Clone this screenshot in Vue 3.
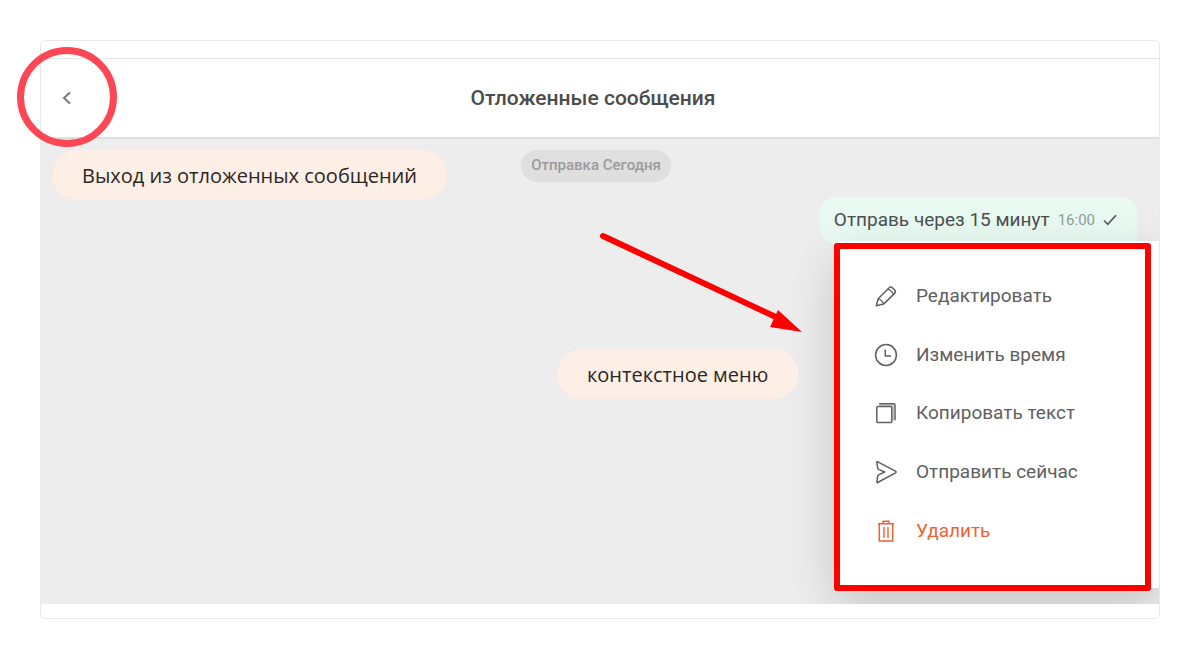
<script setup>
const items = [
  { id: 'edit', label: 'Редактировать' },
  { id: 'time', label: 'Изменить время' },
  { id: 'copy', label: 'Копировать текст' },
  { id: 'send', label: 'Отправить сейчас' },
  { id: 'delete', label: 'Удалить', danger: true },
]
</script>

<template>
  <main class="page">
    <section class="card">
      <header class="header">
        <button class="back" type="button" aria-label="Назад">
          <svg width="12" height="16" viewBox="0 0 12 16" fill="none" stroke="#777" stroke-width="2">
            <path d="M9 2.5 3 8 9 13.5" />
          </svg>
          <span class="ring"></span>
        </button>
        <h1 class="title">Отложенные сообщения</h1>
      </header>

      <div class="chat">
        <div class="day">Отправка Сегодня</div>
        <div class="message">
          <span>Отправь через 15 минут</span>
          <time class="clock">16:00</time>
          <svg class="check" width="14" height="12" viewBox="0 0 14 12" fill="none" stroke="#555f59" stroke-width="1.7">
            <path d="M1 6.5 4.8 10.3 13 1.2" />
          </svg>
        </div>

        <div class="menu">
          <ul class="list">
            <li v-for="item in items" :key="item.id" class="row">
              <button type="button" class="action" :class="{ danger: item.danger }">
                <svg class="icon" width="24" height="24" viewBox="0 0 24 24" fill="none" stroke="currentColor" stroke-width="1.5" stroke-linejoin="round">
                  <template v-if="item.id === 'edit'">
                    <path d="M2.3 21.7 4.2 14.8 14.9 4Q16.6 2.2 18.4 3.8L20.6 6Q22.2 7.7 20.5 9.4L9.6 20.1Z" />
                    <path d="M4.2 14.8Q8 15.6 9.6 20.1M13.8 5.3Q17.8 6.2 19.2 10.6" stroke-width="1.2" />
                  </template>
                  <template v-else-if="item.id === 'time'">
                    <circle cx="12" cy="12" r="10.4" />
                    <path d="M11.3 6.5V13H17" />
                  </template>
                  <template v-else-if="item.id === 'copy'">
                    <rect x="2.8" y="5.5" width="15" height="16" rx="1" />
                    <path d="M5.2 2.8H19.8Q21 2.8 21 4.1V19.2" />
                    <path d="M5.2 4.1H19.2V19.5" stroke-width="1" opacity=".55" />
                  </template>
                  <template v-else-if="item.id === 'send'">
                    <path d="M3.3 1.6Q2.7 1.3 2.9 2.2L3.6 7.8Q3.8 9 5 9.6L10.8 12 5 14.6Q3.8 15.2 3.6 16.4L2.9 22Q2.8 22.9 3.6 22.5L21.5 12.8Q22.8 12 21.5 11.2Z" />
                  </template>
                  <template v-else>
                    <path d="M4 4.8H20M9 4.5V2.2H15V4.5M5.3 5V22H18.7V5" />
                    <path d="M10 8V19M14 8V19" stroke-width="1.4" />
                  </template>
                </svg>
                <span>{{ item.label }}</span>
              </button>
            </li>
          </ul>
          <span class="frame"></span>
        </div>

        <svg class="arrow" width="206" height="104" viewBox="0 0 206 104">
          <path d="M5 5 180 87" stroke="#fe0000" stroke-width="6" stroke-linecap="round" />
          <path d="M180 79 204 101 172 96Z" fill="#fe0000" />
        </svg>
        <div class="note note-exit">Выход из отложенных сообщений</div>
        <div class="note note-menu">контекстное меню</div>
      </div>
    </section>
  </main>
</template>

<style>
body {
  margin: 0;
  background: #fff;
}
</style>

<style scoped>
.page {
  padding: 40px;
  font-family: Roboto, "Liberation Sans", sans-serif;
  font-size: 19px;
  line-height: 24px;
  color: #555;
}
.card {
  border: 1px solid #e9e9e9;
  border-radius: 5px;
  padding: 17px 0 14px;
}
.header {
  display: grid;
  grid-template-columns: 52px 1fr 66px;
  align-items: center;
  min-height: 78px;
  border-top: 1px solid #e4e4e4;
  border-bottom: 2px solid #dfdfdf;
}
.back {
  position: relative;
  display: grid;
  place-items: center;
  height: 52px;
  padding: 0;
  border: 0;
  background: none;
}
.ring {
  position: absolute;
  inset: -25px -24px -23px;
  border: 7px solid #fd4755;
  border-radius: 50%;
  z-index: 2;
}
.title {
  margin: 0;
  text-align: center;
  font-size: 21px;
  font-weight: 500;
  color: #4c4c4c;
}
.chat {
  position: relative;
  display: flex;
  flex-direction: column;
  min-height: 465px;
  background: #ededed;
  overflow: hidden;
}
.day {
  align-self: center;
  margin: 11px 8px 0 0;
  padding: 3px 10px 5px;
  border-radius: 16px;
  background: #dfdfdf;
  color: #9b9b9b;
  font-size: 15px;
  font-weight: 500;
}
.message {
  align-self: flex-end;
  display: flex;
  align-items: center;
  gap: 8px;
  margin: 15px 22px 0 0;
  padding: 11px 20px 12px 14px;
  border-radius: 16px 16px 0 16px;
  background: #e9faf2;
  color: #4c504e;
}
.clock {
  font-size: 15px;
  color: #929d97;
}
.menu {
  position: absolute;
  top: 102px;
  right: 0;
  width: 322px;
  background: #fff;
  box-shadow: 0 18px 48px rgba(0, 0, 0, 0.18);
}
.list {
  display: grid;
  grid-auto-rows: 1fr;
  box-sizing: border-box;
  min-height: 347px;
  margin: 0;
  padding: 26px 0 28px;
  list-style: none;
}
.row {
  display: grid;
}
.action {
  display: flex;
  align-items: center;
  gap: 18px;
  padding: 0 0 0 37px;
  border: 0;
  background: none;
  font: inherit;
  color: #606060;
  text-align: left;
}
.danger {
  color: #ec6337;
}
.frame {
  position: absolute;
  inset: 2px 8px -3px -3px;
  border: 6px solid #fe0000;
  border-radius: 3px;
}
.arrow {
  position: absolute;
  top: 92px;
  left: 557px;
}
.note {
  position: absolute;
  padding: 14px 30px 12px;
  border-radius: 25px;
  background: #feefe6;
  color: #2b2724;
  font-family: "Open Sans", "Noto Sans", sans-serif;
  font-size: 20px;
  white-space: nowrap;
}
.note-exit {
  top: 11px;
  left: 11px;
}
.note-menu {
  top: 210px;
  left: 516px;
}
</style>
